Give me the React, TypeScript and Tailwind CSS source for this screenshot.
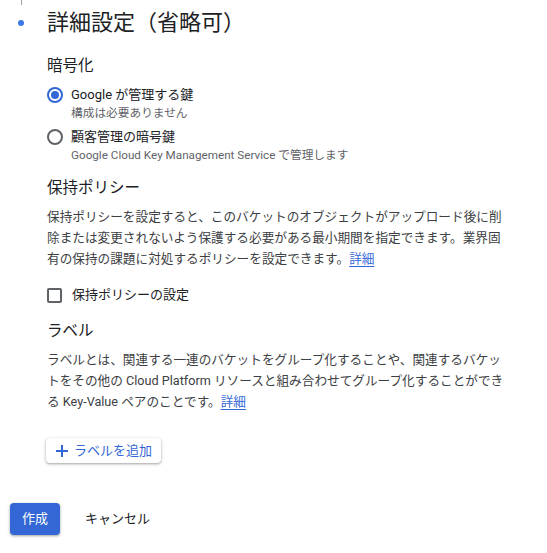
import React from 'react';

const font = { fontFamily: 'Roboto, "Noto Sans CJK JP", sans-serif' };

const Radio: React.FC<{ checked?: boolean; label: string; sub: string; className?: string }> = ({ checked, label, sub, className }) => (
  <div className={`flex items-start ${className ?? ''}`}>
    <div className="h-[20px] flex items-center">
      <div
        className={`w-[16px] h-[16px] rounded-full border-2 flex items-center justify-center ${
          checked ? 'border-[#3367d6]' : 'border-[#5f6368]'
        }`}
      >
        {checked && <div className="w-[8px] h-[8px] rounded-full bg-[#3367d6]" />}
      </div>
    </div>
    <div className="ml-[8px]">
      <div className="text-[13px] leading-[20px] text-[#202124]">{label}</div>
      <div className="text-[11.7px] leading-[16px] text-[#5f6368]">{sub}</div>
    </div>
  </div>
);

export default function App() {
  return (
    <div className="w-[547px] h-[553px] bg-white flex flex-col" style={font}>
      <div className="flex">
        <div className="w-[47px] flex flex-col">
          <div className="ml-[20.5px] w-px h-[5px] bg-[#9aa0a6]" />
          <div className="ml-[18px] mt-[15px] w-[6px] h-[6px] rounded-full bg-[#3b78e7]" />
        </div>
        <div className="flex flex-col pt-[10px]">
          <h2 className="text-[22px] leading-[26px] text-[#202124]">詳細設定（省略可）</h2>

          <h3 className="mt-[20px] text-[15.5px] leading-[20px] text-[#202124]">暗号化</h3>
          <Radio className="mt-[9px]" checked label="Google が管理する鍵" sub="構成は必要ありません" />
          <Radio
            className="mt-[6px]"
            label="顧客管理の暗号鍵"
            sub="Google Cloud Key Management Service で管理します"
          />

          <h3 className="mt-[15px] text-[15.5px] leading-[20px] text-[#202124]">保持ポリシー</h3>
          <p className="mt-[8px] text-[12.65px] leading-[21px] text-[#3c4043] whitespace-nowrap">
            保持ポリシーを設定すると、このバケットのオブジェクトがアップロード後に削
            <br />
            除または変更されないよう保護する必要がある最小期間を指定できます。業界固
            <br />
            有の保持の課題に対処するポリシーを設定できます。
            <a className="text-[#3367d6] underline underline-offset-[3px]">詳細</a>
          </p>

          <label className="mt-[16px] flex items-center h-[20px]">
            <span className="w-[15px] h-[15px] border-2 border-[#5f6368] rounded-[2px]" />
            <span className="ml-[10px] text-[13px] text-[#202124]">保持ポリシーの設定</span>
          </label>

          <h3 className="mt-[16px] text-[15.5px] leading-[20px] text-[#202124]">ラベル</h3>
          <p className="mt-[8px] text-[12.65px] leading-[21px] text-[#3c4043] whitespace-nowrap">
            ラベルとは、関連する一連のバケットをグループ化することや、関連するバケッ
            <br />
            トをその他の Cloud Platform リソースと組み合わせてグループ化することができ
            <br />
            る Key-Value ペアのことです。
            <a className="text-[#3367d6] underline underline-offset-[3px]">詳細</a>
          </p>

          <div className="mt-[26px]">
            <button className="-ml-px h-[25px] pl-[10px] pr-[9px] flex items-center gap-[6px] rounded-[4px] bg-white text-[#3367d6] text-[13px] shadow-[0_1px_2px_rgba(60,64,67,0.3),0_1px_3px_1px_rgba(60,64,67,0.15)]">
              <svg width="12" height="12" viewBox="0 0 12 12">
                <path d="M6 0v12M0 6h12" stroke="#3367d6" strokeWidth="2" />
              </svg>
              <span>ラベルを追加</span>
            </button>
          </div>
        </div>
      </div>

      <div className="mt-[40px] pl-[10px] flex items-center">
        <button className="w-[50px] h-[32px] rounded-[4px] bg-[#3367d6] text-white text-[13px] shadow-[0_1px_2px_rgba(60,64,67,0.3),0_1px_3px_1px_rgba(60,64,67,0.15)]">
          作成
        </button>
        <button className="ml-[25px] text-[13px] text-[#202124]">キャンセル</button>
      </div>
    </div>
  );
}
